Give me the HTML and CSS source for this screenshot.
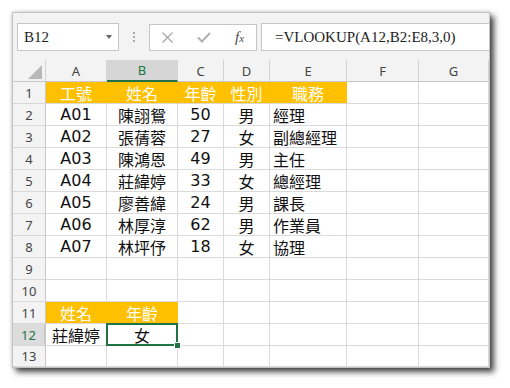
FILE: index.html
```html
<!DOCTYPE html>
<html>
<head>
<meta charset="utf-8">
<link rel="stylesheet" href="styles.css">
</head>
<body>
<div class="window">
  <div class="toolbar">
    <div class="namebox"><span>B12</span><span class="caret"></span></div>
    <div class="grip"><i></i><i></i><i></i></div>
    <div class="fxbtns">
      <svg class="ico-x" width="11" height="11" viewBox="0 0 11 11"><path d="M0.5 0.5 L10.5 10.5 M10.5 0.5 L0.5 10.5" stroke="#a3a3a3" stroke-width="1.1" fill="none"/></svg>
      <svg class="ico-ok" width="14" height="11" viewBox="0 0 14 11"><path d="M1 5.5 L5 9.5 L13 1" stroke="#b0b0b0" stroke-width="2" fill="none"/></svg>
      <span class="fx">f<span class="fx-x">x</span></span>
    </div>
    <div class="formula">=VLOOKUP(A12,B2:E8,3,0)</div>
  </div>
  <div class="sheet">
    <div class="h corner"><span class="tri"></span></div>
    <div class="h">A</div><div class="h sel-col">B</div><div class="h">C</div><div class="h">D</div><div class="h">E</div><div class="h">F</div><div class="h">G</div>

    <div class="h r">1</div><div class="c y">工號</div><div class="c y">姓名</div><div class="c y">年齡</div><div class="c y">性別</div><div class="c y">職務</div><div class="c"></div><div class="c"></div>
    <div class="h r">2</div><div class="c">A01</div><div class="c">陳詡鴛</div><div class="c">50</div><div class="c">男</div><div class="c l">經理</div><div class="c"></div><div class="c"></div>
    <div class="h r">3</div><div class="c">A02</div><div class="c">張蒨蓉</div><div class="c">27</div><div class="c">女</div><div class="c l">副總經理</div><div class="c"></div><div class="c"></div>
    <div class="h r">4</div><div class="c">A03</div><div class="c">陳鴻恩</div><div class="c">49</div><div class="c">男</div><div class="c l">主任</div><div class="c"></div><div class="c"></div>
    <div class="h r">5</div><div class="c">A04</div><div class="c">莊緯婷</div><div class="c">33</div><div class="c">女</div><div class="c l">總經理</div><div class="c"></div><div class="c"></div>
    <div class="h r">6</div><div class="c">A05</div><div class="c">廖善緯</div><div class="c">24</div><div class="c">男</div><div class="c l">課長</div><div class="c"></div><div class="c"></div>
    <div class="h r">7</div><div class="c">A06</div><div class="c">林厚淳</div><div class="c">62</div><div class="c">男</div><div class="c l">作業員</div><div class="c"></div><div class="c"></div>
    <div class="h r">8</div><div class="c">A07</div><div class="c">林坪伃</div><div class="c">18</div><div class="c">女</div><div class="c l">協理</div><div class="c"></div><div class="c"></div>
    <div class="h r">9</div><div class="c"></div><div class="c"></div><div class="c"></div><div class="c"></div><div class="c"></div><div class="c"></div><div class="c"></div>
    <div class="h r">10</div><div class="c"></div><div class="c"></div><div class="c"></div><div class="c"></div><div class="c"></div><div class="c"></div><div class="c"></div>
    <div class="h r">11</div><div class="c y">姓名</div><div class="c y">年齡</div><div class="c"></div><div class="c"></div><div class="c"></div><div class="c"></div><div class="c"></div>
    <div class="h r sel-row">12</div><div class="c">莊緯婷</div><div class="c active">女<span class="handle"></span></div><div class="c"></div><div class="c"></div><div class="c"></div><div class="c"></div><div class="c"></div>
    <div class="h r">13</div><div class="c"></div><div class="c"></div><div class="c"></div><div class="c"></div><div class="c"></div><div class="c"></div><div class="c"></div>
  </div>
</div>
</body>
</html>
```

FILE: styles.css
```css
html, body {
  margin: 0;
  background: #ffffff;
}
body {
  padding: 12px;
}
.window {
  width: 478px;
  box-sizing: border-box;
  border: 1px solid #c2c2c2;
  background: #f3f3f3;
  box-shadow: 4px 4px 6px rgba(0, 0, 0, 0.72), 0 0 4px rgba(0, 0, 0, 0.18);
}
.toolbar {
  display: flex;
  align-items: center;
  height: 47px;
  box-sizing: border-box;
  padding: 10px 0 9px 4px;
}
.namebox {
  width: 102px;
  height: 28px;
  box-sizing: border-box;
  border: 1px solid #c6c6c6;
  background: #fff;
  display: flex;
  align-items: center;
  padding-left: 6px;
  font: 15px "Liberation Serif", serif;
  color: #222;
}
.caret {
  margin-left: auto;
  margin-right: 6px;
  width: 0;
  height: 0;
  border-left: 3.5px solid transparent;
  border-right: 3.5px solid transparent;
  border-top: 4px solid #666;
}
.grip {
  display: flex;
  flex-direction: column;
  gap: 2px;
  margin: 0 14px 0 14px;
}
.grip i {
  display: block;
  width: 2px;
  height: 2px;
  background: #a8a8a8;
}
.fxbtns {
  width: 108px;
  height: 27px;
  box-sizing: border-box;
  border: 1px solid #c6c6c6;
  background: #fff;
  display: flex;
  align-items: center;
  padding-left: 12px;
}
.ico-ok {
  margin-left: 24px;
}
.fx {
  margin-left: 24px;
  font: italic 15px "Liberation Serif", serif;
  color: #4a4a4a;
}
.fx-x {
  font-size: 11px;
}
.formula {
  flex: 1;
  margin-left: 4px;
  height: 28px;
  box-sizing: border-box;
  border: 1px solid #c6c6c6;
  border-right: none;
  background: #fff;
  display: flex;
  align-items: center;
  padding-left: 13px;
  font: 15px "Liberation Serif", serif;
  color: #222;
}
.sheet {
  display: grid;
  grid-template-columns: 33px 61px 71px 46px 46px 77px 72px 70px;
  grid-template-rows: 22px repeat(12, 22px) 21px;
  background: #fff;
}
.sheet > div {
  box-sizing: border-box;
  border-right: 1px solid #dadada;
  border-bottom: 1px solid #dadada;
  display: flex;
  align-items: center;
  justify-content: center;
}
.sheet > .h {
  background: #f3f3f3;
  font: 13px "Noto Sans", sans-serif;
  color: #444;
  border-right-color: #d4d4d4;
  border-bottom-color: #c8c8c8;
}
.sheet > .h.r {
  border-right-color: #c8c8c8;
  border-bottom-color: #d8d8d8;
}
.sheet > .corner {
  justify-content: flex-end;
  align-items: flex-end;
  padding: 0 3px 2px 0;
}
.tri {
  width: 0;
  height: 0;
  border-left: 14px solid transparent;
  border-bottom: 14px solid #b8b8b8;
}
.sheet > .sel-col {
  background: #d6d6d6;
  color: #217346;
  border-bottom: 2px solid #217346;
}
.sheet > .sel-row {
  background: #dcdcdc;
  color: #217346;
  border-right: 2px solid #217346;
}
.c {
  font: 16px "DejaVu Sans", "Noto Sans CJK TC", sans-serif;
  color: #111;
  white-space: nowrap;
}
.sheet > .c.l {
  justify-content: flex-start;
  padding-left: 3px;
}
.sheet > .c.y {
  background: #ffc000;
  color: #fff;
  border-right-color: #ffc000;
}
.sheet > .active {
  position: relative;
}
.active::after {
  content: "";
  position: absolute;
  left: -1px;
  top: -1px;
  right: -1px;
  bottom: -1px;
  border: 2px solid #217346;
}
.handle {
  position: absolute;
  right: -4px;
  bottom: -4px;
  width: 5px;
  height: 5px;
  background: #217346;
  border: 1px solid #fff;
  z-index: 2;
}
```
